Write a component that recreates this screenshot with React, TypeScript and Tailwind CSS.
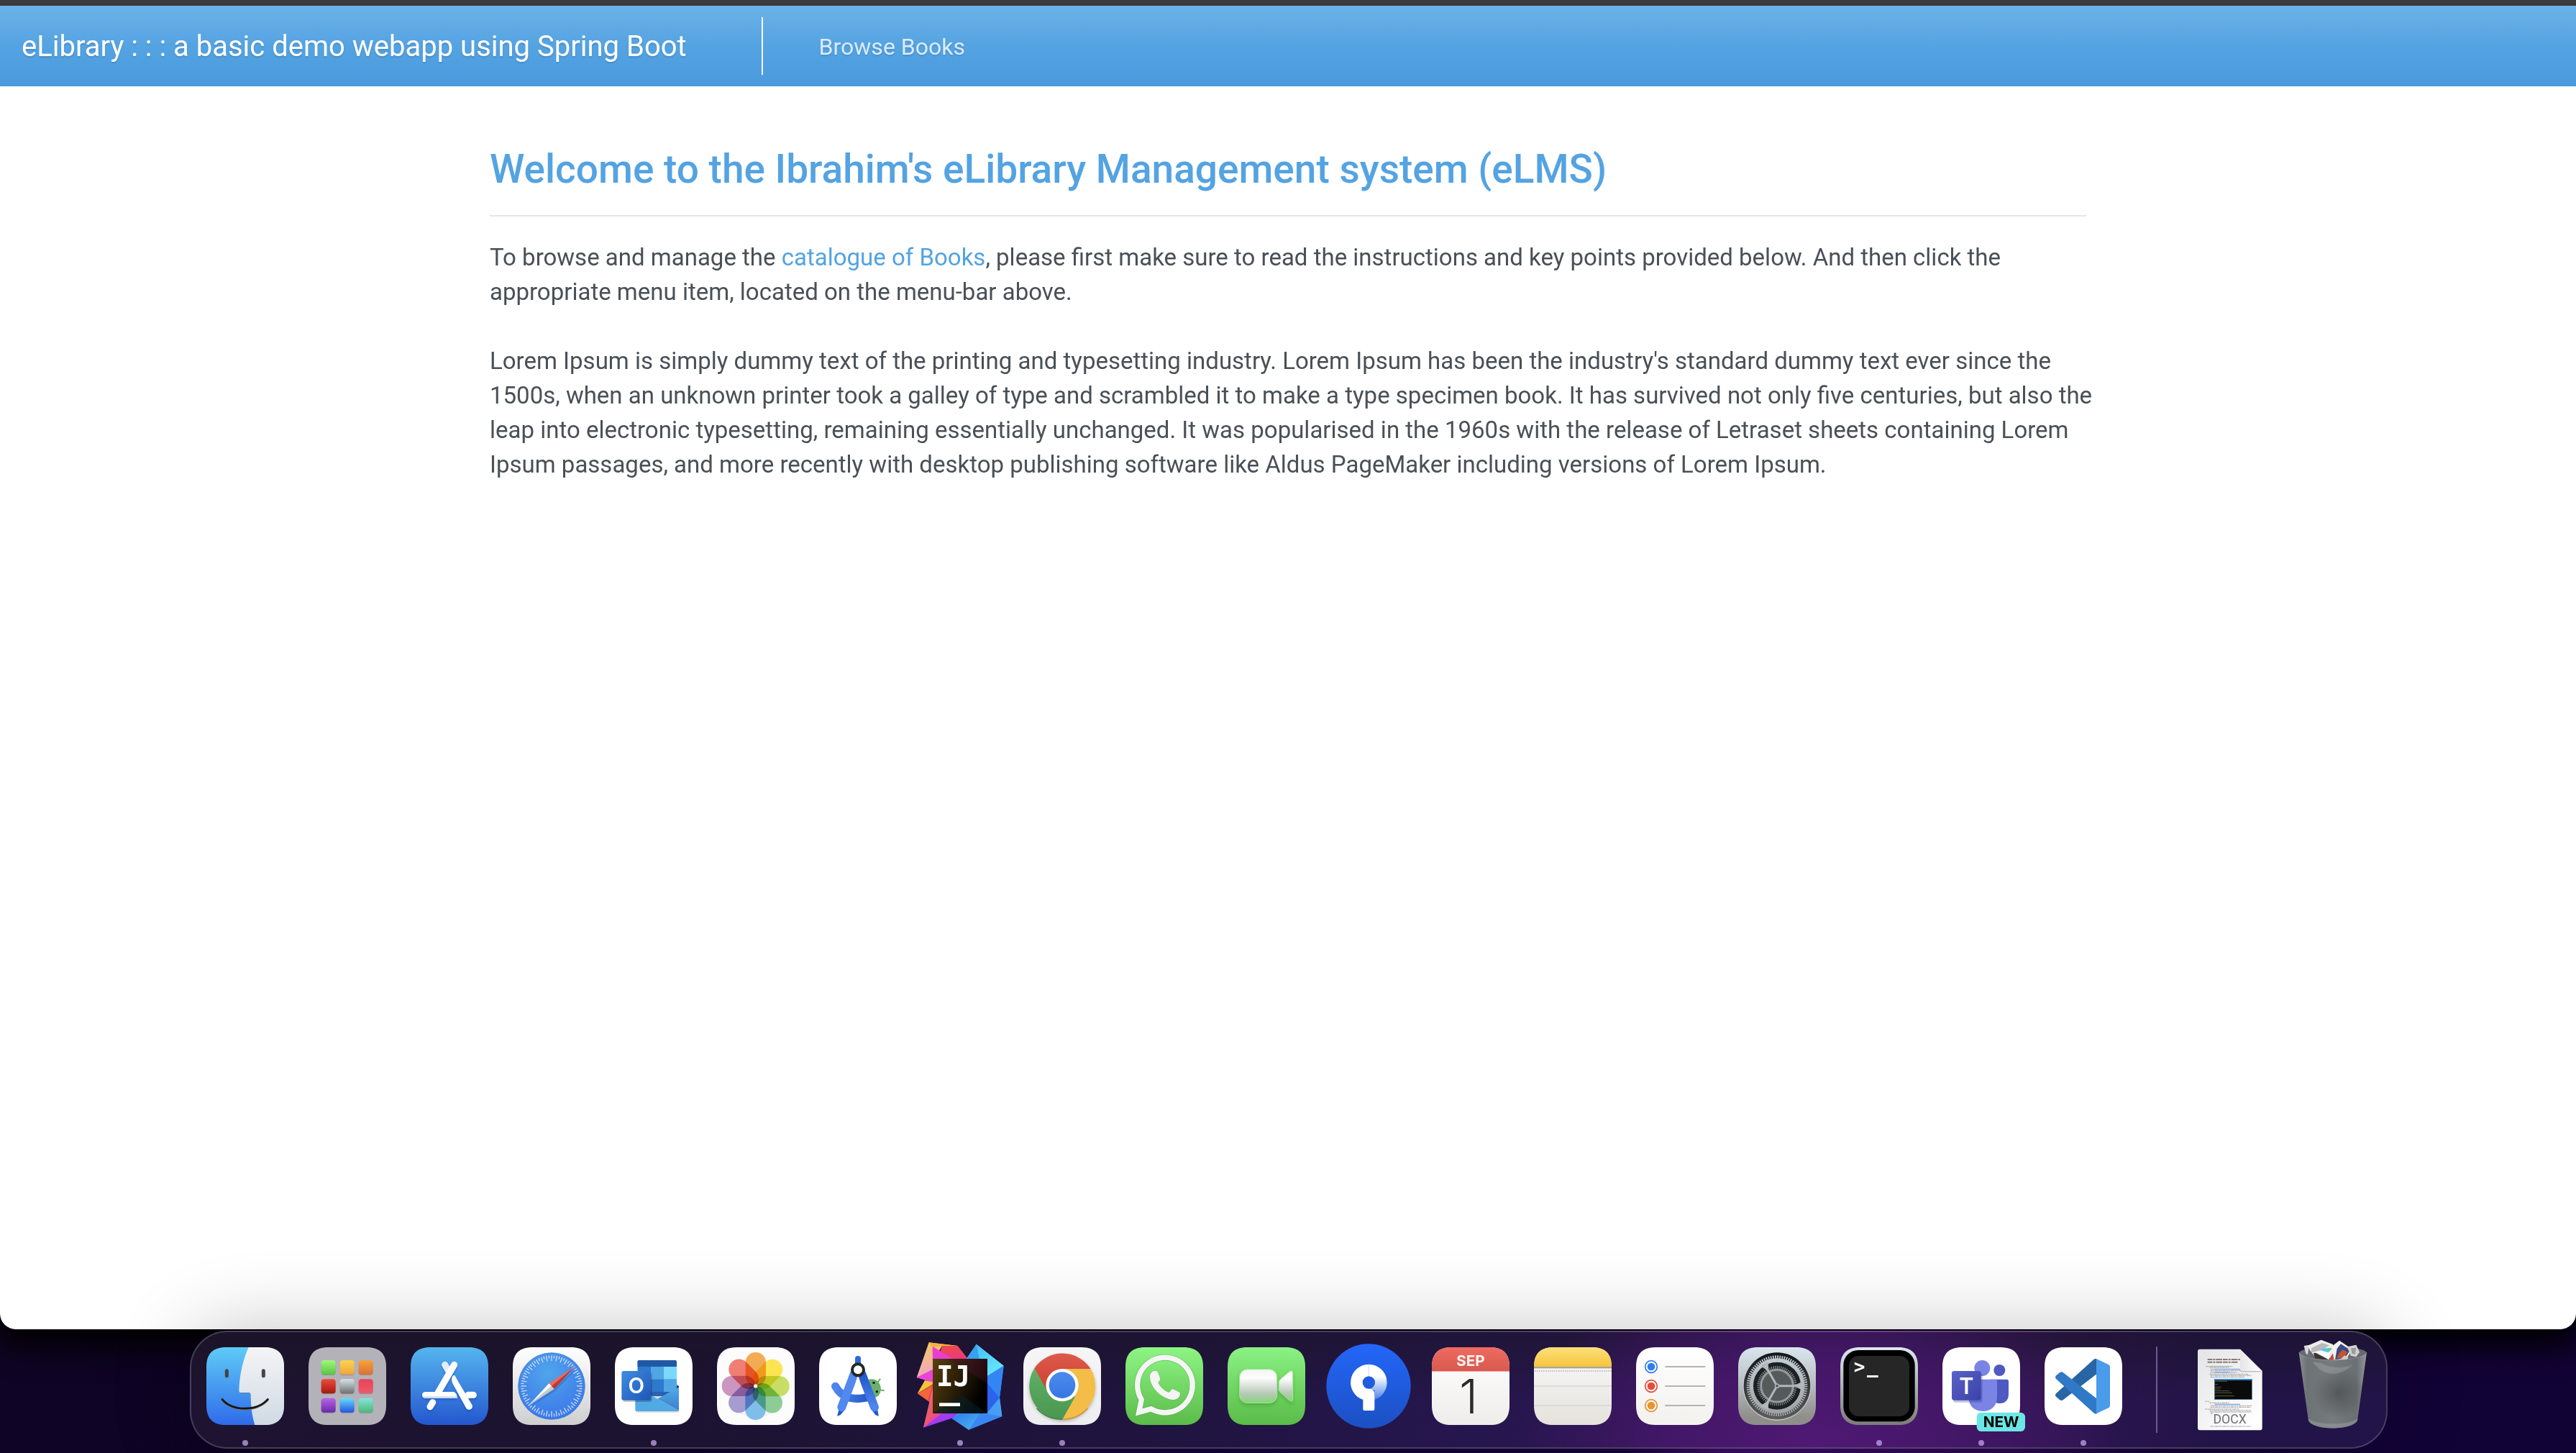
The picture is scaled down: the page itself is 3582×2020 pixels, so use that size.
import React from 'react'

const icon = 'block h-[108px] w-[108px] overflow-visible'

function Gradient({ id, from, to, x2 = 0, y2 = 1 }: { id: string; from: string; to: string; x2?: number; y2?: number }) {
  return (
    <linearGradient id={id} x1="0" y1="0" x2={x2} y2={y2}>
      <stop offset="0" stopColor={from} />
      <stop offset="1" stopColor={to} />
    </linearGradient>
  )
}

const SQUIRCLE =
  'M82 0H242C297 0 324 27 324 82V242C324 297 297 324 242 324H82C27 324 0 297 0 242V82C0 27 27 0 82 0Z'

function Finder() {
  return (
    <svg viewBox="0 0 324 324" className={icon} aria-hidden="true">
      <defs>
        <Gradient id="fi-a" from="#5ecbf7" to="#2f6bea" />
        <Gradient id="fi-b" from="#f4f4f5" to="#d0dae4" />
        <clipPath id="fi-c"><path d={SQUIRCLE} /></clipPath>
      </defs>
      <g clipPath="url(#fi-c)">
        <rect width="324" height="324" fill="url(#fi-a)" />
        <path d="M176 0C154 48 138 112 136 180Q136 190 145 190H178Q185 190 185 198C185 245 190 285 202 324H324V0Z" fill="url(#fi-b)" />
        <path d="M140 191H180" stroke="#5f7890" strokeWidth="3" />
      </g>
      <g stroke="#444" strokeLinecap="round" fill="none">
        <path d="M85 98V119M238 98V119" strokeWidth="15" />
        <path d="M66 219C105 271 212 271 256 219" strokeWidth="9" stroke="#777" />
        <path d="M66 217C105 268 212 268 256 217" strokeWidth="8" stroke="#151515" />
      </g>
    </svg>
  )
}

const PAD = [
  ['#a3f57e', '#55c83c'], ['#f9d450', '#f0a63a'], ['#f2a33c', '#dd7032'],
  ['#ee4a3c', '#a5190f'], ['#d5e3ea', '#6f6f6f'], ['#e9425a', '#ea5c68'],
  ['#b765e8', '#6a2aa8'], ['#66dcfb', '#2455df'], ['#86e4dc', '#4cb877'],
]

function Launchpad() {
  return (
    <svg viewBox="0 0 324 324" className={icon} aria-hidden="true">
      <defs>{PAD.map(([a, b], i) => <Gradient key={i} id={`lp-${i}`} from={a} to={b} />)}</defs>
      <path d={SQUIRCLE} fill="#b3b2b9" />
      {PAD.map((_, i) => (
        <g key={i}>
          <rect x={53 + (i % 3) * 78} y={57 + Math.floor(i / 3) * 79} width="60" height="60" rx="12" fill="#000" opacity=".18" />
          <rect x={53 + (i % 3) * 78} y={54 + Math.floor(i / 3) * 79} width="60" height="60" rx="12" fill={`url(#lp-${i})`} />
        </g>
      ))}
    </svg>
  )
}

function AppStore() {
  return (
    <svg viewBox="0 0 324 324" className={icon} aria-hidden="true">
      <defs>
        <Gradient id="as-a" from="#55b5ef" to="#2457cf" />
        <filter id="as-f" x="-20%" y="-20%" width="140%" height="150%">
          <feDropShadow dx="0" dy="7" stdDeviation="5" floodColor="#0b3fa8" floodOpacity=".4" />
        </filter>
      </defs>
      <path d={SQUIRCLE} fill="url(#as-a)" />
      <g filter="url(#as-f)" fill="none" stroke="#fff" strokeWidth="27" strokeLinecap="round">
        <path d="M143 73L158 99" stroke="#e3edf8" />
        <path d="M182 73L114 190" />
        <path d="M240 199H262" />
        <path d="M172 130C174 120 180 114 184 118C187 121 190 127 192 132L256 240C264 256 243 268 232 254L176 152C172 145 171 137 172 130Z" fill="#fff" stroke="none" />
        <path d="M61 186H178Q192 188 195 212H61A13 13 0 0 1 61 186Z" fill="#fff" stroke="none" />
        <path d="M92 230L81 248" />
      </g>
      <path d="M56 208H190" stroke="#bcd0ea" strokeWidth="7" strokeLinecap="round" opacity=".7" />
    </svg>
  )
}

function Safari() {
  return (
    <svg viewBox="0 0 324 324" className={icon} aria-hidden="true">
      <defs>
        <Gradient id="sa-a" from="#ffffff" to="#cfcfcf" />
        <radialGradient id="sa-b" cx=".45" cy=".3" r=".75">
          <stop offset="0" stopColor="#50a5ec" />
          <stop offset="1" stopColor="#3a74e8" />
        </radialGradient>
      </defs>
      <path d={SQUIRCLE} fill="url(#sa-a)" />
      <circle cx="162" cy="162" r="139" fill="url(#sa-b)" stroke="#3b7fd0" strokeWidth="2" />
      <g stroke="#dbe9fb" strokeWidth="4" opacity=".9">
        {Array.from({ length: 72 }, (_, i) => (
          <line key={i} x1="162" x2="162" y1="34" y2={i % 2 ? 46 : 57} transform={`rotate(${i * 5} 162 162)`} />
        ))}
      </g>
      <path d="M268 88L178 182L72 250Z" fill="#123a80" opacity=".22" />
      <path d="M261 79L151 151L162 162Z" fill="#f0695c" />
      <path d="M261 79L173 174L162 162Z" fill="#c8362b" />
      <path d="M66 243L151 151L162 162Z" fill="#fff" />
      <path d="M66 243L173 174L162 162Z" fill="#c9cbca" />
    </svg>
  )
}

function Outlook() {
  return (
    <svg viewBox="0 0 324 324" className={icon} aria-hidden="true">
      <defs>
        <Gradient id="ol-a" from="#3f8de0" to="#1e55b8" x2={1} />
        <Gradient id="ol-b" from="#4fa6e6" to="#3c7fcc" />
        <clipPath id="ol-c"><rect x="94" y="54" width="164" height="150" rx="8" /></clipPath>
      </defs>
      <path d={SQUIRCLE} fill="#fff" />
      <rect x="86" y="200" width="181" height="72" rx="8" fill="#000" opacity=".15" />
      <path d="M258 157L267 162V168L258 174Z" fill="#17407c" />
      <g clipPath="url(#ol-c)">
        <rect x="94" y="54" width="164" height="150" fill="#2e78ce" />
        <rect x="94" y="54" width="164" height="27" fill="#2158a4" />
        <rect x="150" y="81" width="54" height="53" fill="#50a5e4" />
        <rect x="204" y="81" width="54" height="53" fill="#7ad8fd" />
        <rect x="204" y="134" width="54" height="53" fill="#50a5e4" />
        <rect x="94" y="186" width="164" height="30" fill="#2763b2" />
      </g>
      <path d="M258 174L267 170V260L179 215L232 186H258Z" fill="url(#ol-b)" />
      <path d="M85 165L267 264Q266 267 259 267H93Q85 267 85 259Z" fill="#52aae5" />
      <path d="M179 215L232 186H258L267 175V264Z" fill="url(#ol-b)" />
      <rect x="33" y="106" width="122" height="122" rx="9" fill="#000" opacity=".22" />
      <rect x="28" y="99" width="122" height="122" rx="9" fill="url(#ol-a)" />
      <text x="89" y="192" textAnchor="middle" fontFamily="Inter, sans-serif" fontWeight="600" fontSize="88" fill="#fff">O</text>
    </svg>
  )
}

const PETALS = ['#f2a03c', '#fbe13a', '#bfdb4e', '#7fc688', '#6cb6e8', '#9c8fcb', '#c587b8', '#ef6c5e']

function Photos() {
  return (
    <svg viewBox="0 0 324 324" className={icon} aria-hidden="true">
      <path d={SQUIRCLE} fill="#fcfcfd" />
      <ellipse cx="162" cy="180" rx="118" ry="116" fill="#7b86b0" opacity=".08" />
      <g className="isolate">
        {PETALS.map((c, i) => (
          <rect key={c} x="119" y="21" width="85" height="141" rx="42" fill={c} fillOpacity=".88" className="mix-blend-multiply" transform={`rotate(${i * 45} 161 162)`} />
        ))}
      </g>
      <circle cx="161" cy="162" r="8" fill="#f3f3ee" />
    </svg>
  )
}

function AndroidStudio() {
  return (
    <svg viewBox="0 0 324 324" className={icon} aria-hidden="true">
      <defs>
        <Gradient id="an-a" from="#1f58c8" to="#4f86ee" />
        <Gradient id="an-b" from="#4f86ee" to="#2157c6" x2={1} y2={0} />
      </defs>
      <path d={SQUIRCLE} fill="#fff" />
      <path d="M244 148L254 133M255 178L270 181" stroke="#6ab06a" strokeWidth="6" strokeLinecap="round" />
      <path d="M205 135C240 125 265 155 256 186C253 198 244 208 232 210Z" fill="#6ab06a" />
      <circle cx="228" cy="148" r="5" fill="#111" />
      <circle cx="241" cy="185" r="5" fill="#111" />
      <path d="M68 163C95 213 150 224 215 205" fill="none" stroke="url(#an-b)" strokeWidth="34" strokeLinecap="round" />
      <path d="M84 262L78 285L88 280L102 264ZM242 262L246 285L236 280L224 264Z" fill="#1f58c8" stroke="#1f58c8" strokeWidth="4" strokeLinejoin="round" />
      <path d="M162 118L143 192H182Z" fill="#fff" />
      <path d="M146 112L94 250" stroke="#5389ef" strokeWidth="36" strokeLinecap="round" />
      <path d="M178 112L231 250" stroke="url(#an-a)" strokeWidth="36" strokeLinecap="round" />
      <path d="M162 112L148 168H177Z" fill="#fff" />
      <rect x="150" y="36" width="24" height="50" rx="12" fill="#2f69d8" />
      <circle cx="162" cy="94" r="24" fill="#fff" stroke="#23272a" strokeWidth="12" />
    </svg>
  )
}

function IntelliJ() {
  return (
    <svg viewBox="0 0 324 324" className={icon} aria-hidden="true">
      <defs>
        <Gradient id="ij-a" from="#f9cf52" to="#ef9ae0" x2={0.5} />
        <Gradient id="ij-b" from="#f04a4a" to="#e83a7a" x2={0.3} />
        <Gradient id="ij-c" from="#f5913a" to="#d43ae0" x2={0.7} />
        <Gradient id="ij-d" from="#3fb6f6" to="#6cf0ff" x2={1} />
        <Gradient id="ij-e" from="#2f6cf0" to="#4aa6f0" />
        <Gradient id="ij-f" from="#5a4010" to="#000" x2={1} y2={0.4} />
        <Gradient id="ij-g" from="#2f7af2" to="#4cb6ea" x2={1} />
      </defs>
      <path d="M32 -20L152 -6L87 -6L48 60L48 143L-19 126Z" fill="url(#ij-a)" />
      <path d="M32 -20L152 -6L87 -6L48 0Z" fill="#f6b03c" />
      <path d="M87 -6H152L200 55L137 55L75 30Z" fill="url(#ij-b)" />
      <path d="M47 -4L150 60H48Z" fill="#e83fd0" />
      <path d="M-19 126L48 92V148Z" fill="#ea45d8" />
      <path d="M15 138L60 148L-16 193Z" fill="#f8c23c" />
      <path d="M-16 193L60 150L35 229Z" fill="#f2653a" />
      <path d="M48 148L28 222L35 229L60 260Z" fill="#ee3f5a" />
      <path d="M48 170L9 335L110 275Z" fill="url(#ij-c)" />
      <path d="M48 190L9 335L62 270Z" fill="#f0596a" />
      <path d="M9 335L127 296L160 270H80Z" fill="#a03cf2" />
      <path d="M9 335L90 272L60 270Z" fill="#ee4a90" />
      <path d="M230 -13L344 77L327 211L337 288L198 344L127 296L160 270L190 46Z" fill="url(#ij-e)" />
      <path d="M230 -13L344 77L276 120L240 48H190Z" fill="url(#ij-d)" />
      <path d="M230 -13L190 46L245 60Z" fill="#38a0ee" />
      <path d="M344 77L327 211L276 150V120Z" fill="#3385f4" />
      <path d="M276 150L327 211L276 275Z" fill="#2b62ee" />
      <path d="M327 211L337 288L276 272Z" fill="#45a0f4" />
      <path d="M337 288L198 344L245 275Z" fill="#3a86f4" />
      <path d="M127 296L198 344L245 275H165Z" fill="url(#ij-g)" />
      <rect x="48" y="48" width="228" height="228" fill="url(#ij-f)" />
      <path d="M110 48H276V150Z" fill="#4a0f28" opacity=".45" />
      <path d="M48 276L170 200L276 276Z" fill="#06202b" opacity=".55" />
      <text x="63" y="162" fontFamily="'DejaVu Sans Mono', monospace" fontWeight="700" fontSize="117" fill="#fff">IJ</text>
      <rect x="75" y="232" width="87" height="14" fill="#fff" />
    </svg>
  )
}

function Chrome() {
  return (
    <svg viewBox="0 0 324 324" className={icon} aria-hidden="true">
      <defs>
        <Gradient id="ch-a" from="#f6f6f7" to="#ededf0" />
        <Gradient id="ch-b" from="#dd5a4a" to="#cc3d30" />
        <Gradient id="ch-c" from="#5fb066" to="#4a9650" />
        <Gradient id="ch-d" from="#4b8af0" to="#3877e2" />
        <filter id="ch-f" x="-20%" y="-20%" width="140%" height="150%">
          <feDropShadow dx="0" dy="7" stdDeviation="6" floodColor="#333" floodOpacity=".35" />
        </filter>
      </defs>
      <path d={SQUIRCLE} fill="url(#ch-a)" />
      <g filter="url(#ch-f)">
        <path d="M46 88A140 140 0 0 1 281 91L162 91V160L103 193Z" fill="url(#ch-b)" />
        <path d="M281 91A140 140 0 0 1 162 302L221 193L162 160V91Z" fill="#f3bd47" />
        <path d="M46 88A140 140 0 0 0 162 302L216 206L162 160L100 183Z" fill="url(#ch-c)" />
      </g>
      <path d="M56 255A140 140 0 0 0 162 300" fill="none" stroke="#3d8344" strokeWidth="5" />
      <path d="M162 300A140 140 0 0 0 268 255" fill="none" stroke="#d0903a" strokeWidth="5" />
      <circle cx="162" cy="158" r="68" fill="#fff" />
      <circle cx="162" cy="158" r="55" fill="url(#ch-d)" />
    </svg>
  )
}

function WhatsApp() {
  return (
    <svg viewBox="0 0 324 324" className={icon} aria-hidden="true">
      <defs><Gradient id="wa-a" from="#8df584" to="#5cbb49" /></defs>
      <path d={SQUIRCLE} fill="url(#wa-a)" />
      <path d="M67 218A115 115 0 1 1 107 257L56 271Z" fill="none" stroke="#3c9a38" strokeWidth="27" opacity=".35" />
      <path d="M67 218A115 115 0 1 1 107 257L56 271Z" fill="none" stroke="#f5f5f5" strokeWidth="22" />
      <path
        d="M102 122C102 108 112 98 124 98C131 98 134 101 136 107L144 128C146 133 145 137 141 141C136 146 136 149 139 154C150 170 162 181 176 187C181 189 184 188 187 184C191 176 194 173 199 175L223 187C229 190 229 194 227 200C223 211 210 220 196 219C150 212 103 170 102 122Z"
        fill="#f5f5f5" stroke="#3c9a38" strokeOpacity=".35" strokeWidth="3" paintOrder="stroke"
      />
    </svg>
  )
}

function FaceTime() {
  return (
    <svg viewBox="0 0 324 324" className={icon} aria-hidden="true">
      <defs>
        <Gradient id="ft-a" from="#8af183" to="#5abb48" />
        <linearGradient id="ft-b" x1="0" y1="0" x2="0" y2="1">
          <stop offset="0" stopColor="#f0f6f0" />
          <stop offset=".25" stopColor="#fdfdfd" />
          <stop offset=".72" stopColor="#b9c9b8" />
          <stop offset="1" stopColor="#84d578" />
        </linearGradient>
        <filter id="ft-f" x="-20%" y="-20%" width="140%" height="160%">
          <feDropShadow dx="0" dy="10" stdDeviation="8" floodColor="#257a1c" floodOpacity=".35" />
        </filter>
      </defs>
      <path d={SQUIRCLE} fill="url(#ft-a)" />
      <g filter="url(#ft-f)" fill="url(#ft-b)" stroke="#a5e79b" strokeWidth="3">
        <rect x="50" y="92" width="156" height="140" rx="32" />
        <path d="M214 148Q214 139 221 133L256 103Q272 92 272 108V216Q272 232 256 220L221 189Q214 183 214 174Z" />
      </g>
    </svg>
  )
}

function Sourcetree() {
  return (
    <svg viewBox="0 0 324 324" className={icon} aria-hidden="true">
      <defs>
        <Gradient id="st-a" from="#2366f8" to="#1c50c2" />
        <linearGradient id="st-b" x1="0" y1="0" x2="0" y2="1">
          <stop offset=".35" stopColor="#fff" />
          <stop offset="1" stopColor="#4a83e2" />
        </linearGradient>
      </defs>
      <circle cx="162" cy="162" r="176" fill="url(#st-a)" />
      <path d="M163 71A76 76 0 0 1 187 219V180L163 173A26 26 0 0 0 163 121Z" fill="url(#st-b)" />
      <path d="M163 71A76 76 0 0 0 139 219V258Q139 264 145 264H181Q187 264 187 258V195Q187 174 163 173A26 26 0 0 1 163 121Z" fill="#fff" />
    </svg>
  )
}

function CalendarIcon() {
  return (
    <svg viewBox="0 0 324 324" className={icon} aria-hidden="true">
      <defs>
        <Gradient id="ca-a" from="#ffffff" to="#eeedea" />
        <Gradient id="ca-b" from="#f06a60" to="#d75a50" />
        <clipPath id="ca-c"><path d={SQUIRCLE} /></clipPath>
      </defs>
      <g clipPath="url(#ca-c)">
        <rect width="324" height="324" fill="url(#ca-a)" />
        <rect width="324" height="100" fill="url(#ca-b)" />
        <rect y="99" width="324" height="3" fill="#f3a59f" />
      </g>
      <text x="162" y="77" textAnchor="middle" fontFamily="Inter, sans-serif" fontWeight="700" fontSize="62" fill="#fbf3f2">SEP</text>
      <text x="153" y="275" textAnchor="middle" fontFamily="Inter, sans-serif" fontWeight="300" fontSize="196" fill="#2b2b2b">1</text>
    </svg>
  )
}

function Notes() {
  return (
    <svg viewBox="0 0 324 324" className={icon} aria-hidden="true">
      <defs>
        <Gradient id="no-a" from="#fbe07a" to="#f7c43c" />
        <Gradient id="no-b" from="#fafafa" to="#e5e2dc" />
        <clipPath id="no-c"><path d={SQUIRCLE} /></clipPath>
      </defs>
      <g clipPath="url(#no-c)">
        <rect width="324" height="324" fill="url(#no-b)" />
        <rect width="324" height="82" fill="url(#no-a)" />
        <rect y="81" width="324" height="7" fill="#aaa595" />
        <path d="M3 99H324" stroke="#c5c3c0" strokeWidth="6" strokeDasharray="5 4" />
        <path d="M0 162H324M0 243H324" stroke="#d6d5d8" strokeWidth="5" />
      </g>
    </svg>
  )
}

function Reminders() {
  return (
    <svg viewBox="0 0 324 324" className={icon} aria-hidden="true">
      <defs><Gradient id="re-a" from="#ffffff" to="#f2f1ee" /></defs>
      <path d={SQUIRCLE} fill="url(#re-a)" />
      {['#2f7cf0', '#e64b3c', '#e8942f'].map((c, i) => (
        <g key={c}>
          <circle cx="63" cy={81 + i * 81} r="25" fill="none" stroke={c} strokeWidth="5" />
          <circle cx="63" cy={81 + i * 81} r="16" fill={c} />
          <path d={`M121 ${81 + i * 81}H289`} stroke="#b3b3b6" strokeWidth="6" />
        </g>
      ))}
    </svg>
  )
}

function Settings() {
  return (
    <svg viewBox="0 0 324 324" className={icon} aria-hidden="true">
      <defs>
        <linearGradient id="se-a" x1="0" y1="0" x2="0" y2="1">
          <stop offset="0" stopColor="#d9e6ee" />
          <stop offset=".45" stopColor="#b9c0c4" />
          <stop offset=".9" stopColor="#8f8e8b" />
        </linearGradient>
        <Gradient id="se-b" from="#111518" to="#5a5b5a" />
        <Gradient id="se-c" from="#c0cad0" to="#a0a4a6" />
      </defs>
      <path d={SQUIRCLE} fill="url(#se-a)" />
      <circle cx="162" cy="163" r="141" fill="none" stroke="#cfd3d4" strokeWidth="3" />
      <circle cx="162" cy="161" r="139" fill="url(#se-b)" />
      <circle cx="162" cy="161" r="100" fill="#1e2123" />
      <circle cx="162" cy="161" r="77" fill="none" stroke="#7d8386" strokeWidth="12" strokeDasharray="4 4" />
      <circle cx="162" cy="161" r="67" fill="#555a5b" stroke="#939a9d" strokeWidth="9" />
      <circle cx="162" cy="161" r="120" fill="none" stroke="url(#se-c)" strokeWidth="14" strokeDasharray="5.3 4.12" />
      <circle cx="162" cy="161" r="107" fill="none" stroke="url(#se-c)" strokeWidth="16" />
      <g fill="none" stroke="#b0b8bc" strokeLinecap="round">
        {[0, 120, 240].map((a) => (
          <g key={a} transform={`rotate(${a} 162 161)`}>
            <path d="M162 161H262" strokeWidth="9" />
            <path d="M236 161L266 146V176Z" fill="#b0b8bc" strokeWidth="4" strokeLinejoin="round" />
          </g>
        ))}
      </g>
      <circle cx="162" cy="161" r="10" fill="#a7afb3" />
      <circle cx="162" cy="161" r="5" fill="#4a4e50" />
    </svg>
  )
}

function Terminal() {
  return (
    <svg viewBox="0 0 324 324" className={icon} aria-hidden="true">
      <defs><Gradient id="te-a" from="#dbe8f0" to="#7d7b79" /></defs>
      <path d={SQUIRCLE} fill="url(#te-a)" />
      <rect x="13" y="12" width="298" height="298" rx="62" fill="#000" />
      <rect x="36" y="36" width="252" height="252" rx="40" fill="#262626" />
      <text x="56" y="108" fontFamily="'DejaVu Sans Mono', monospace" fontWeight="700" fontSize="78" fill="#fff">&gt;</text>
      <rect x="111" y="117" width="47" height="9" fill="#fff" />
    </svg>
  )
}

function Teams() {
  return (
    <svg viewBox="0 0 324 324" className={icon} aria-hidden="true">
      <defs><Gradient id="tm-a" from="#5a62c8" to="#3a42a8" x2={1} /></defs>
      <path d={SQUIRCLE} fill="#fff" />
      <circle cx="238" cy="96" r="24" fill="#5059c0" />
      <path d="M200 134H268Q276 134 276 142V196C276 222 260 234 240 234C222 234 206 226 200 212Z" fill="#4f59c2" />
      <circle cx="166" cy="87" r="33" fill="#7b84e4" />
      <path d="M109 134H220Q228 134 228 142V206C228 245 203 267 168 267C134 267 109 245 109 208Z" fill="#7b84e4" />
      <rect x="45" y="108" width="122" height="122" rx="10" fill="#202a80" opacity=".28" />
      <rect x="39" y="99" width="122" height="122" rx="10" fill="url(#tm-a)" />
      <text x="100" y="194" textAnchor="middle" fontFamily="Inter, sans-serif" fontWeight="600" fontSize="92" fill="#fff">T</text>
      <rect x="143" y="272" width="202" height="79" rx="19" fill="#6be6e5" />
      <text x="245" y="333" textAnchor="middle" fontFamily="Inter, sans-serif" fontWeight="700" fontSize="62" fill="#000">NEW</text>
    </svg>
  )
}

function VSCode() {
  return (
    <svg viewBox="0 0 324 324" className={icon} aria-hidden="true">
      <path d={SQUIRCLE} fill="#fff" />
      <path d="M205 51Q210 46 217 49V112L78 219Q70 225 63 219L48 206Q42 200 48 193Z" fill="#2865a4" />
      <path d="M48 132Q42 125 48 118L63 106Q70 100 78 106L217 214V277Q210 279 205 274Z" fill="#3079c7" />
      <path d="M216 49Q211 48 216 48L268 73Q273 76 273 82V243Q273 249 268 252L216 277Z" fill="#4a9bea" />
    </svg>
  )
}

const DOC_ROWS = [
  [53, 80, 120], [68, 84, 90], [72, 91, 130], [72, 98, 180], [72, 105, 120], [68, 112, 170], [72, 118, 178], [72, 124, 150],
  [50, 226, 26], [68, 232, 90], [72, 244, 180], [72, 250, 176], [50, 258, 150], [68, 264, 184], [72, 270, 178], [72, 276, 20], [72, 330, 178],
]

function Document() {
  return (
    <svg viewBox="0 0 324 324" className={icon} aria-hidden="true">
      <defs>
        <Gradient id="do-a" from="#e4e4e6" to="#ffffff" x2={0.8} />
        <Gradient id="do-b" from="#e6e6e8" to="#ffffff" x2={1} y2={0} />
      </defs>
      <path d="M36 8H204L296 99V337Q296 346 287 346H36Q27 346 27 337V17Q27 8 36 8Z" fill="url(#do-a)" />
      <path d="M68 51H204M68 62H194" stroke="#6d6256" strokeWidth="6" strokeDasharray="20 3 9 3 26 3" opacity=".8" />
      {DOC_ROWS.map(([x, y, w]) => (
        <path key={y} d={`M${x + 8} ${y}h${w - 8}`} stroke="#7c7c80" strokeWidth="3" strokeDasharray="9 2 5 2 13 2" opacity=".7" />
      ))}
      <path d="M97 92H204M97 104H160M97 238H204" stroke="#7aa2f0" strokeWidth="4" />
      <rect x="97" y="133" width="156" height="85" fill="#0b0b0b" stroke="#4f7ea8" strokeWidth="2" />
      <rect x="96" y="132" width="158" height="6" fill="#2f86d0" />
      <path d="M99 142H150M99 155H112M99 166H125M99 174H120M99 182H160M99 190H170M99 203H180" stroke="#5b583e" strokeWidth="3" />
      <path d="M204 8V91Q204 99 212 99H296Z" fill="url(#do-b)" />
      <path d="M206 101H290" stroke="#9a9a9e" strokeWidth="4" opacity=".6" />
      <text x="161" y="318" textAnchor="middle" fontFamily="Roboto, sans-serif" fontWeight="400" fontSize="53" fill="#707074">DOCX</text>
    </svg>
  )
}

function Trash() {
  return (
    <svg viewBox="0 0 324 324" className={icon} aria-hidden="true">
      <defs>
        <linearGradient id="tr-a" x1="0" y1="0" x2="1" y2="0">
          <stop offset="0" stopColor="#8b9094" />
          <stop offset=".12" stopColor="#6d7275" />
          <stop offset=".5" stopColor="#767b7e" />
          <stop offset=".85" stopColor="#6a6f72" />
          <stop offset="1" stopColor="#94999d" />
        </linearGradient>
        <radialGradient id="tr-b" cx=".55" cy=".5" r=".5">
          <stop offset="0" stopColor="#4b4f52" stopOpacity=".8" />
          <stop offset="1" stopColor="#4b4f52" stopOpacity="0" />
        </radialGradient>
        <clipPath id="tr-c"><path d="M23 22L62 300C66 350 262 350 268 300L306 22C290 64 40 64 23 22Z" /></clipPath>
      </defs>
      <ellipse cx="165" cy="24" rx="141" ry="28" fill="#666b72" />
      <g>
        <path d="M44 -6L66 -10L60 30L90 48L52 26Z" fill="#d9d9d9" />
        <path d="M58 -6L116 -31L165 -12L178 44L96 46L70 14Z" fill="#ececec" />
        <path d="M74 4L120 -18L150 -8L120 12L76 22Z" fill="#b9b9b9" />
        <path d="M84 24L126 20L142 52H92Z" fill="#3f3633" />
        <path d="M88 20L160 2L148 52Z" fill="#fafafa" />
        <path d="M112 12L126 4L162 6L146 22Z" fill="#52c7e8" />
        <path d="M140 4L160 4L150 14Z" fill="#7cc544" />
        <path d="M148 52L168 20L170 54Z" fill="#c84c2d" />
        <path d="M170 54L160 -4L192 -28L246 8L220 50Z" fill="#f2f2f2" />
        <path d="M182 6L198 -14L238 12L214 46L174 52Z" fill="#3c4a86" />
        <path d="M192 24L206 10L226 20L208 44L180 44Z" fill="#c4552f" />
        <path d="M224 -2L262 -10L276 20L262 40L240 36Z" fill="#d2d2d2" />
        <path d="M240 4L262 2L258 30L244 26Z" fill="#9c9c9c" />
        <path d="M196 50L214 34L230 44L222 54Z" fill="#d9cdbb" />
      </g>
      <path d="M23 22L62 300C66 350 262 350 268 300L306 22C290 64 40 64 23 22Z" fill="url(#tr-a)" />
      <g clipPath="url(#tr-c)">
        <ellipse cx="180" cy="190" rx="110" ry="110" fill="url(#tr-b)" />
        <path d="M80 60C120 120 190 130 250 70C220 90 150 90 120 66Z" fill="#a7abae" opacity=".4" />
        <path d="M62 296C90 326 240 326 268 296V345H62Z" fill="#959b9f" opacity=".55" />
      </g>
      <path d="M23 22C40 64 290 64 306 22" fill="none" stroke="#9fa4a8" strokeWidth="3" opacity=".7" />
    </svg>
  )
}

const APPS: { name: string; Icon: () => React.JSX.Element; running?: boolean }[] = [
  { name: 'Finder', Icon: Finder, running: true },
  { name: 'Launchpad', Icon: Launchpad },
  { name: 'App Store', Icon: AppStore },
  { name: 'Safari', Icon: Safari },
  { name: 'Outlook', Icon: Outlook, running: true },
  { name: 'Photos', Icon: Photos },
  { name: 'Android Studio', Icon: AndroidStudio },
  { name: 'IntelliJ IDEA', Icon: IntelliJ, running: true },
  { name: 'Chrome', Icon: Chrome, running: true },
  { name: 'WhatsApp', Icon: WhatsApp },
  { name: 'FaceTime', Icon: FaceTime },
  { name: 'Sourcetree', Icon: Sourcetree },
  { name: 'Calendar', Icon: CalendarIcon },
  { name: 'Notes', Icon: Notes },
  { name: 'Reminders', Icon: Reminders },
  { name: 'System Settings', Icon: Settings },
  { name: 'Terminal', Icon: Terminal, running: true },
  { name: 'Teams', Icon: Teams, running: true },
  { name: 'Visual Studio Code', Icon: VSCode, running: true },
]

function DockItem({ name, Icon, running }: { name: string; Icon: () => React.JSX.Element; running?: boolean }) {
  return (
    <button type="button" aria-label={name} className="flex w-[142px] flex-col items-center pt-[21px]">
      <Icon />
      {running && <span className="mt-[21px] h-2 w-2 rounded-full bg-[#b99be0]/80" />}
    </button>
  )
}

export default function App() {
  return (
    <div className="flex min-h-screen flex-col bg-[linear-gradient(to_right,#100426_0%,#0a0220_18%,#12023c_40%,#14043c_63%,#3c0d68_67%,#2a0850_78%,#120338_84%,#120335_100%)] font-[Roboto,sans-serif]">
      <div className="flex flex-1 flex-col rounded-b-[22px] bg-white shadow-[0_16px_44px_8px_#000]">
        <div className="h-2 bg-[#3b3b3b]" />
        <nav className="flex h-28 items-center bg-linear-to-b from-[#6cb2e8] via-[#54a3e2] to-[#4a9ade] pl-[30px] text-white">
          <a href="#" className="pt-0.5 text-[40px] leading-12 [text-shadow:0_2px_2px_rgba(0,0,0,0.12)]">
            eLibrary : : : a basic demo webapp using Spring Boot
          </a>
          <div className="ml-[104px] h-20 w-0.5 bg-white" />
          <a href="#" className="ml-[78px] pt-0.5 text-[32px] leading-12 text-white/80 [text-shadow:0_2px_2px_rgba(0,0,0,0.1)]">
            Browse Books
          </a>
        </nav>
        <main className="mx-auto w-full max-w-[2220px] pt-[81px] text-[33px] leading-12 text-[#495057]">
          <h1 className="text-[55px] leading-[68px] font-medium text-[#54a3e2]">
            Welcome to the Ibrahim's eLibrary Management system (eLMS)
          </h1>
          <hr className="mt-[30px] mb-[33px] border-t-2 border-[#e5e5e5]" />
          <div className="-mr-5">
            <p>
              To browse and manage the <a href="#" className="text-[#54a3e2]">catalogue of Books</a>, please first make sure
              to read the instructions and key points provided below. And then click the appropriate menu item, located on
              the menu-bar above.
            </p>
            <p className="mt-12">
              Lorem Ipsum is simply dummy text of the printing and typesetting industry. Lorem Ipsum has been the industry's
              standard dummy text ever since the 1500s, when an unknown printer took a galley of type and scrambled it to
              make a type specimen book. It has survived not only five centuries, but also the leap into electronic
              typesetting, remaining essentially unchanged. It was popularised in the 1960s with the release of Letraset
              sheets containing Lorem Ipsum passages, and more recently with desktop publishing software like Aldus
              PageMaker including versions of Lorem Ipsum.
            </p>
          </div>
        </main>
      </div>
      <footer className="flex justify-center pt-0.5 pb-1.5 pl-0.5">
        <div className="flex h-[164px] rounded-[52px] border-2 border-white/18 bg-[radial-gradient(ellipse_420px_260px_at_74%_100%,#4f1974_0%,#441768_45%,transparent_100%),linear-gradient(to_bottom,rgba(26,20,36,0.55),transparent_60%),linear-gradient(to_right,#1e1330_0%,#1b1330_20%,#201440_45%,#26164e_58%,#2e1550_85%,#221448_92%,#221448_100%)] px-1 shadow-[0_0_110px_rgba(0,0,0,0.24)]">
          {APPS.map((app) => (
            <DockItem key={app.name} {...app} />
          ))}
          <div className="mx-[30px] mt-5 h-[120px] w-0.5 bg-[#705a92]" />
          <DockItem name="Document" Icon={Document} />
          <DockItem name="Trash" Icon={Trash} />
        </div>
      </footer>
    </div>
  )
}
